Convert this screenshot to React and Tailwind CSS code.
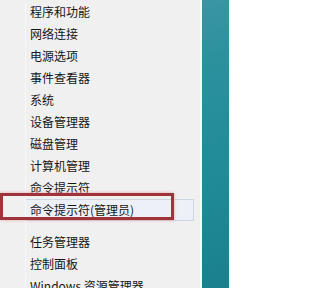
const items = [
  '程序和功能',
  '网络连接',
  '电源选项',
  '事件查看器',
  '系统',
  '设备管理器',
  '磁盘管理',
  '计算机管理',
  '命令提示符',
  '命令提示符(管理员)',
]

const items2 = ['任务管理器', '控制面板', 'Windows 资源管理器']

function Row({ label, active }) {
  return (
    <div
      className={`h-[22px] ml-[25px] mr-[6px] pl-[4px] flex items-center border ${
        active ? 'bg-[#edf1f7] border-[#cdd6e1]' : 'border-transparent'
      }`}
    >
      <span className="text-[12px] leading-none text-[#161616]">{label}</span>
    </div>
  )
}

export default function App() {
  return (
    <div
      className="w-[229px] h-[288px] overflow-hidden flex bg-[#f0f0f0]"
      style={{ fontFamily: '"Noto Sans CJK SC", "Noto Sans", sans-serif' }}
    >
      {/* menu */}
      <div className="relative w-[200px] h-full pt-px bg-[#f0f0f0]">
        <div className="absolute left-[25px] top-0 bottom-0 w-px bg-[#f7f7f7]" />
        {items.map((label, i) => (
          <Row key={label} label={label} active={i === items.length - 1} />
        ))}
        <div className="h-[10px]" />
        {items2.map((label) => (
          <Row key={label} label={label} />
        ))}

        {/* annotation */}
        <div className="absolute left-0 top-[193px] w-[174px] h-[27px] border-[3px] border-[#a0323a] shadow-[0_0_3px_#e8a0a8]" />
      </div>
      <div className="w-[2px] h-full bg-[#fafafa]" />
      {/* start screen edge */}
      <div className="flex-1 h-full bg-[linear-gradient(160deg,#3a96a2_0%,#2a909c_25%,#218b98_60%,#1a7f8c_100%)]" />
    </div>
  )
}
